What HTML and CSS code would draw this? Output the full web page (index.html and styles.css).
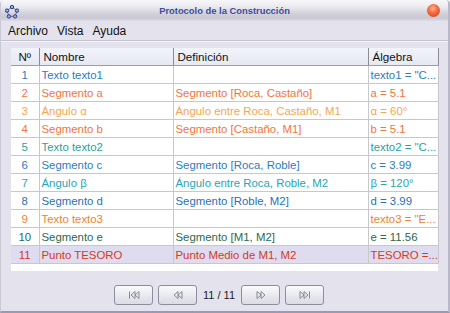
FILE: index.html
```
<!DOCTYPE html>
<html lang="es">

<head>
    <meta charset="UTF-8">
    <title>Protocolo de la Construcción</title>
    <link rel="stylesheet" href="styles.css">
</head>

<body>

    <div class="window">
        <div class="titlebar">
            <svg class="app-icon" width="14" height="14" viewBox="0 0 14 14">
                <polygon points="7,2 12,5.6 10.1,11.4 3.9,11.4 2,5.6" fill="none" stroke="#777" stroke-width="1"/>
                <circle cx="7" cy="2" r="1.7" fill="#9ab0f0" stroke="#1c2c80" stroke-width="0.9"/>
                <circle cx="12" cy="5.6" r="1.7" fill="#9ab0f0" stroke="#1c2c80" stroke-width="0.9"/>
                <circle cx="10.1" cy="11.4" r="1.7" fill="#9ab0f0" stroke="#1c2c80" stroke-width="0.9"/>
                <circle cx="3.9" cy="11.4" r="1.7" fill="#9ab0f0" stroke="#1c2c80" stroke-width="0.9"/>
                <circle cx="2" cy="5.6" r="1.7" fill="#9ab0f0" stroke="#1c2c80" stroke-width="0.9"/>
            </svg>
            <span class="title">Protocolo de la Construcción</span>
            <span class="close-btn"></span>
        </div>

        <div class="menubar">
            <span>Archivo</span>
            <span>Vista</span>
            <span>Ayuda</span>
        </div>

        <div class="content">
            <div class="table-pane">
                <table class="protocol">
                    <colgroup>
                        <col class="c-num">
                        <col class="c-name">
                        <col class="c-def">
                        <col class="c-alg">
                    </colgroup>
                    <thead>
                        <tr>
                            <th>Nº</th>
                            <th>Nombre</th>
                            <th>Definición</th>
                            <th>Álgebra</th>
                        </tr>
                    </thead>
                    <tbody>
                        <tr class="blue">
                            <td>1</td><td>Texto texto1</td><td></td><td>texto1 = "C...</td>
                        </tr>
                        <tr class="orange">
                            <td>2</td><td>Segmento a</td><td>Segmento [Roca, Castaño]</td><td>a = 5.1</td>
                        </tr>
                        <tr class="light-orange">
                            <td>3</td><td>Ángulo α</td><td>Ángulo entre Roca, Castaño, M1</td><td>α = 60°</td>
                        </tr>
                        <tr class="orange">
                            <td>4</td><td>Segmento b</td><td>Segmento [Castaño, M1]</td><td>b = 5.1</td>
                        </tr>
                        <tr class="teal">
                            <td>5</td><td>Texto texto2</td><td></td><td>texto2 = "C...</td>
                        </tr>
                        <tr class="blue">
                            <td>6</td><td>Segmento c</td><td>Segmento [Roca, Roble]</td><td>c = 3.99</td>
                        </tr>
                        <tr class="cyan">
                            <td>7</td><td>Ángulo β</td><td>Ángulo entre Roca, Roble, M2</td><td>β = 120°</td>
                        </tr>
                        <tr class="dark-blue">
                            <td>8</td><td>Segmento d</td><td>Segmento [Roble, M2]</td><td>d = 3.99</td>
                        </tr>
                        <tr class="amber">
                            <td>9</td><td>Texto texto3</td><td></td><td>texto3 = "E...</td>
                        </tr>
                        <tr class="green">
                            <td>10</td><td>Segmento e</td><td>Segmento [M1, M2]</td><td>e = 11.56</td>
                        </tr>
                        <tr class="red selected">
                            <td>11</td><td>Punto TESORO</td><td>Punto Medio de M1, M2</td><td>TESORO =...</td>
                        </tr>
                    </tbody>
                </table>
            </div>

            <div class="nav">
                <button class="nav-btn">
                    <svg width="12" height="8" viewBox="0 0 12 8">
                        <path d="M1.5 0.5v7M7 0.5L3 4l4 3.5zM11 0.5L7 4l4 3.5z" fill="none" stroke="#8a8a8a"/>
                    </svg>
                </button>
                <button class="nav-btn">
                    <svg width="10" height="8" viewBox="0 0 10 8">
                        <path d="M5 0.5L1 4l4 3.5zM9 0.5L5 4l4 3.5z" fill="none" stroke="#8a8a8a"/>
                    </svg>
                </button>
                <span class="counter">11 / 11</span>
                <button class="nav-btn">
                    <svg width="10" height="8" viewBox="0 0 10 8">
                        <path d="M1 0.5L5 4l-4 3.5zM5 0.5L9 4l-4 3.5z" fill="none" stroke="#8a8a8a"/>
                    </svg>
                </button>
                <button class="nav-btn">
                    <svg width="12" height="8" viewBox="0 0 12 8">
                        <path d="M1 0.5L5 4l-4 3.5zM5 0.5L9 4l-4 3.5zM10.5 0.5v7" fill="none" stroke="#8a8a8a"/>
                    </svg>
                </button>
            </div>
        </div>
    </div>

</body>

</html>
```

FILE: styles.css
```
body {
    margin: 0;
    background-color: #fff;
    font-family: "Liberation Sans", Arial, sans-serif;
}

.window {
    width: 450px;
    height: 313px;
    box-sizing: border-box;
    background-color: #e4e3ed;
    border-left: 1px solid #c9c8d4;
    border-right: 2px solid #b9b8c8;
    border-bottom: 2px solid #9a9ab4;
    border-radius: 4px 4px 0 0;
    overflow: hidden;
}

.titlebar {
    position: relative;
    height: 21px;
    display: flex;
    align-items: center;
    justify-content: center;
    background: linear-gradient(#f7f7fa 0%, #ecebf1 30%, #d2d1db 65%, #c9c8d2 85%, #dddce5 100%);
}

.app-icon {
    position: absolute;
    left: 4px;
    top: 5px;
}

.title {
    font-size: 9.4px;
    font-weight: bold;
    color: #3b4d9e;
}

.close-btn {
    position: absolute;
    right: 8px;
    top: 4px;
    width: 13px;
    height: 13px;
    border-radius: 50%;
    background: radial-gradient(circle at 45% 35%, #ffb08a 0%, #f2683a 45%, #c83a14 100%);
}

.menubar {
    height: 19px;
    display: flex;
    align-items: center;
    gap: 9px;
    padding-left: 7px;
    font-size: 12px;
    color: #111;
    border-bottom: 1px solid #c4c3d0;
}

.content {
    border-top: 1px solid #f4f4f8;
    padding: 6px 10px 0 10px;
}

.table-pane {
    width: 427px;
    height: 223px;
    background-color: #fff;
}

.protocol {
    width: 427px;
    table-layout: fixed;
    border-collapse: collapse;
    font-size: 11.4px;
}

.c-num { width: 28px; }
.c-name { width: 134px; }
.c-def { width: 195px; }
.c-alg { width: 70px; }

.protocol th {
    height: 17px;
    padding: 0 4px;
    text-align: left;
    font-weight: normal;
    font-size: 11.6px;
    color: #111;
    background: linear-gradient(#f1f3fa, #e6e9f3);
    border-right: 1px solid #8c8c94;
    border-bottom: 1px solid #9c9ca4;
}

.protocol th:first-child {
    text-align: center;
}

.protocol td {
    height: 17px;
    padding: 0 2px;
    white-space: nowrap;
    overflow: hidden;
    border-right: 1px solid #c8c8cc;
    border-bottom: 1px solid #c8c8cc;
}

.protocol td:first-child {
    text-align: center;
}

.protocol tr.selected td {
    background-color: #dedcee;
}

.blue { color: #2c7cc2; }
.orange { color: #f4743a; }
.light-orange { color: #f5a650; }
.teal { color: #1ea39c; }
.cyan { color: #26a6b6; }
.dark-blue { color: #2a6fba; }
.amber { color: #f5821f; }
.green { color: #2b6a4c; }
.red { color: #d5391f; }

.nav {
    display: flex;
    align-items: center;
    gap: 5px;
    margin-top: 14px;
    padding-left: 103px;
}

.nav-btn {
    width: 39px;
    height: 20px;
    padding: 0;
    display: flex;
    align-items: center;
    justify-content: center;
    border: 1px solid #8d8d9c;
    border-radius: 3px;
    background: linear-gradient(#fbfbfd, #e6e6ee 60%, #dcdce6);
}

.counter {
    font-size: 11px;
    color: #222;
    padding: 0 1px;
}
```
